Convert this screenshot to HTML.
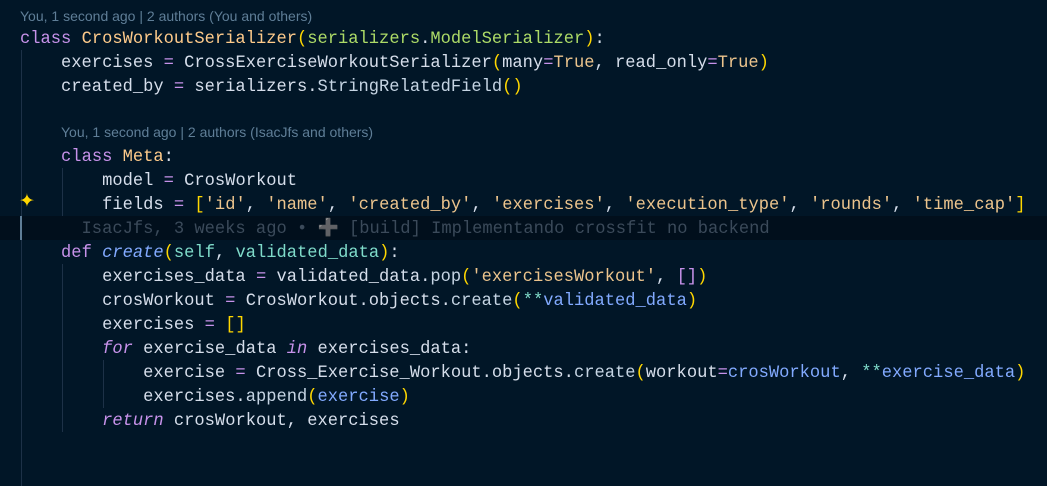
<!DOCTYPE html>
<html><head><style>
body{margin:0;width:1047px;height:486px;background:#011627;overflow:hidden;position:relative}
.l{position:absolute;left:20px;height:24px;line-height:24px;font-family:"Liberation Mono",monospace;font-size:17.1px;color:#d6deeb;white-space:pre;margin-top:2px}
.cl{position:absolute;font-family:"Liberation Sans",sans-serif;font-size:14px;color:#5f7e97;white-space:pre;line-height:22px;margin-top:1px}
.k{color:#c792ea}.c{color:#ffcb8b}.s{color:#ecc48d}.b{color:#ffd700}.g{color:#addb67}.t{color:#7fdbca}.f{color:#82aaff}.i{font-style:italic}.bl{color:#82aaff}.o{color:#c792ea}.m{color:#c5d4e3}
.gd{position:absolute;width:1px;background:#1d3147}
</style></head><body>
<div style="position:absolute;left:0;top:216px;width:1047px;height:24px;background:#010f1c"></div>
<div class="gd" style="left:21px;top:50px;height:436px"></div>
<div class="gd" style="left:62px;top:168px;height:48px"></div>
<div class="gd" style="left:62px;top:264px;height:168px"></div>
<div class="gd" style="left:103px;top:360px;height:48px"></div>
<div style="position:absolute;left:20px;top:216px;width:2px;height:24px;background:#5f7e97"></div>
<div class="cl" style="left:20px;top:4px">You, 1 second ago | 2 authors (You and others)</div>
<div class="l" style="top:26px"><span class="k">class</span> <span class="c">CrosWorkoutSerializer</span><span class="b">(</span><span class="g">serializers</span>.<span class="g">ModelSerializer</span><span class="b">)</span>:</div>
<div class="l" style="top:50px">    exercises <span class="o">=</span> CrossExerciseWorkoutSerializer<span class="b">(</span>many<span class="o">=</span><span class="s">True</span>, read_only<span class="o">=</span><span class="s">True</span><span class="b">)</span></div>
<div class="l" style="top:74px">    created_by <span class="o">=</span> serializers.<span class="m">StringRelatedField</span><span class="b">()</span></div>
<div class="cl" style="left:61px;top:120px">You, 1 second ago | 2 authors (IsacJfs and others)</div>
<div class="l" style="top:144px">    <span class="k">class</span> <span class="c">Meta</span>:</div>
<div class="l" style="top:168px">        model <span class="o">=</span> CrosWorkout</div>
<div class="l" style="top:192px">        fields <span class="o">=</span> <span class="b">[</span><span class="s">'id'</span>, <span class="s">'name'</span>, <span class="s">'created_by'</span>, <span class="s">'exercises'</span>, <span class="s">'execution_type'</span>, <span class="s">'rounds'</span>, <span class="s">'time_cap'</span><span class="b">]</span></div>
<div style="position:absolute;left:19px;top:191px;color:#ffd700;font-size:19px;line-height:22px">✦</div>
<div class="l" style="top:216px;color:#3b4a5a">      IsacJfs, 3 weeks ago • ➕ [build] Implementando crossfit no backend</div>
<div class="l" style="top:240px">    <span class="k">def</span> <span class="f i">create</span><span class="b">(</span><span class="t">self</span>, <span class="t">validated_data</span><span class="b">)</span>:</div>
<div class="l" style="top:264px">        exercises_data <span class="o">=</span> validated_data.<span class="m">pop</span><span class="b">(</span><span class="s">'exercisesWorkout'</span>, <span class="k">[]</span><span class="b">)</span></div>
<div class="l" style="top:288px">        crosWorkout <span class="o">=</span> CrosWorkout.objects.<span class="m">create</span><span class="b">(</span><span class="t">**</span><span class="bl">validated_data</span><span class="b">)</span></div>
<div class="l" style="top:312px">        exercises <span class="o">=</span> <span class="b">[]</span></div>
<div class="l" style="top:336px">        <span class="k i">for</span> exercise_data <span class="k i">in</span> exercises_data:</div>
<div class="l" style="top:360px">            exercise <span class="o">=</span> Cross_Exercise_Workout.objects.<span class="m">create</span><span class="b">(</span>workout<span class="o">=</span><span class="bl">crosWorkout</span>, <span class="t">**</span><span class="bl">exercise_data</span><span class="b">)</span></div>
<div class="l" style="top:384px">            exercises.<span class="m">append</span><span class="b">(</span><span class="bl">exercise</span><span class="b">)</span></div>
<div class="l" style="top:408px">        <span class="k i">return</span> crosWorkout, exercises</div>
</body></html>
